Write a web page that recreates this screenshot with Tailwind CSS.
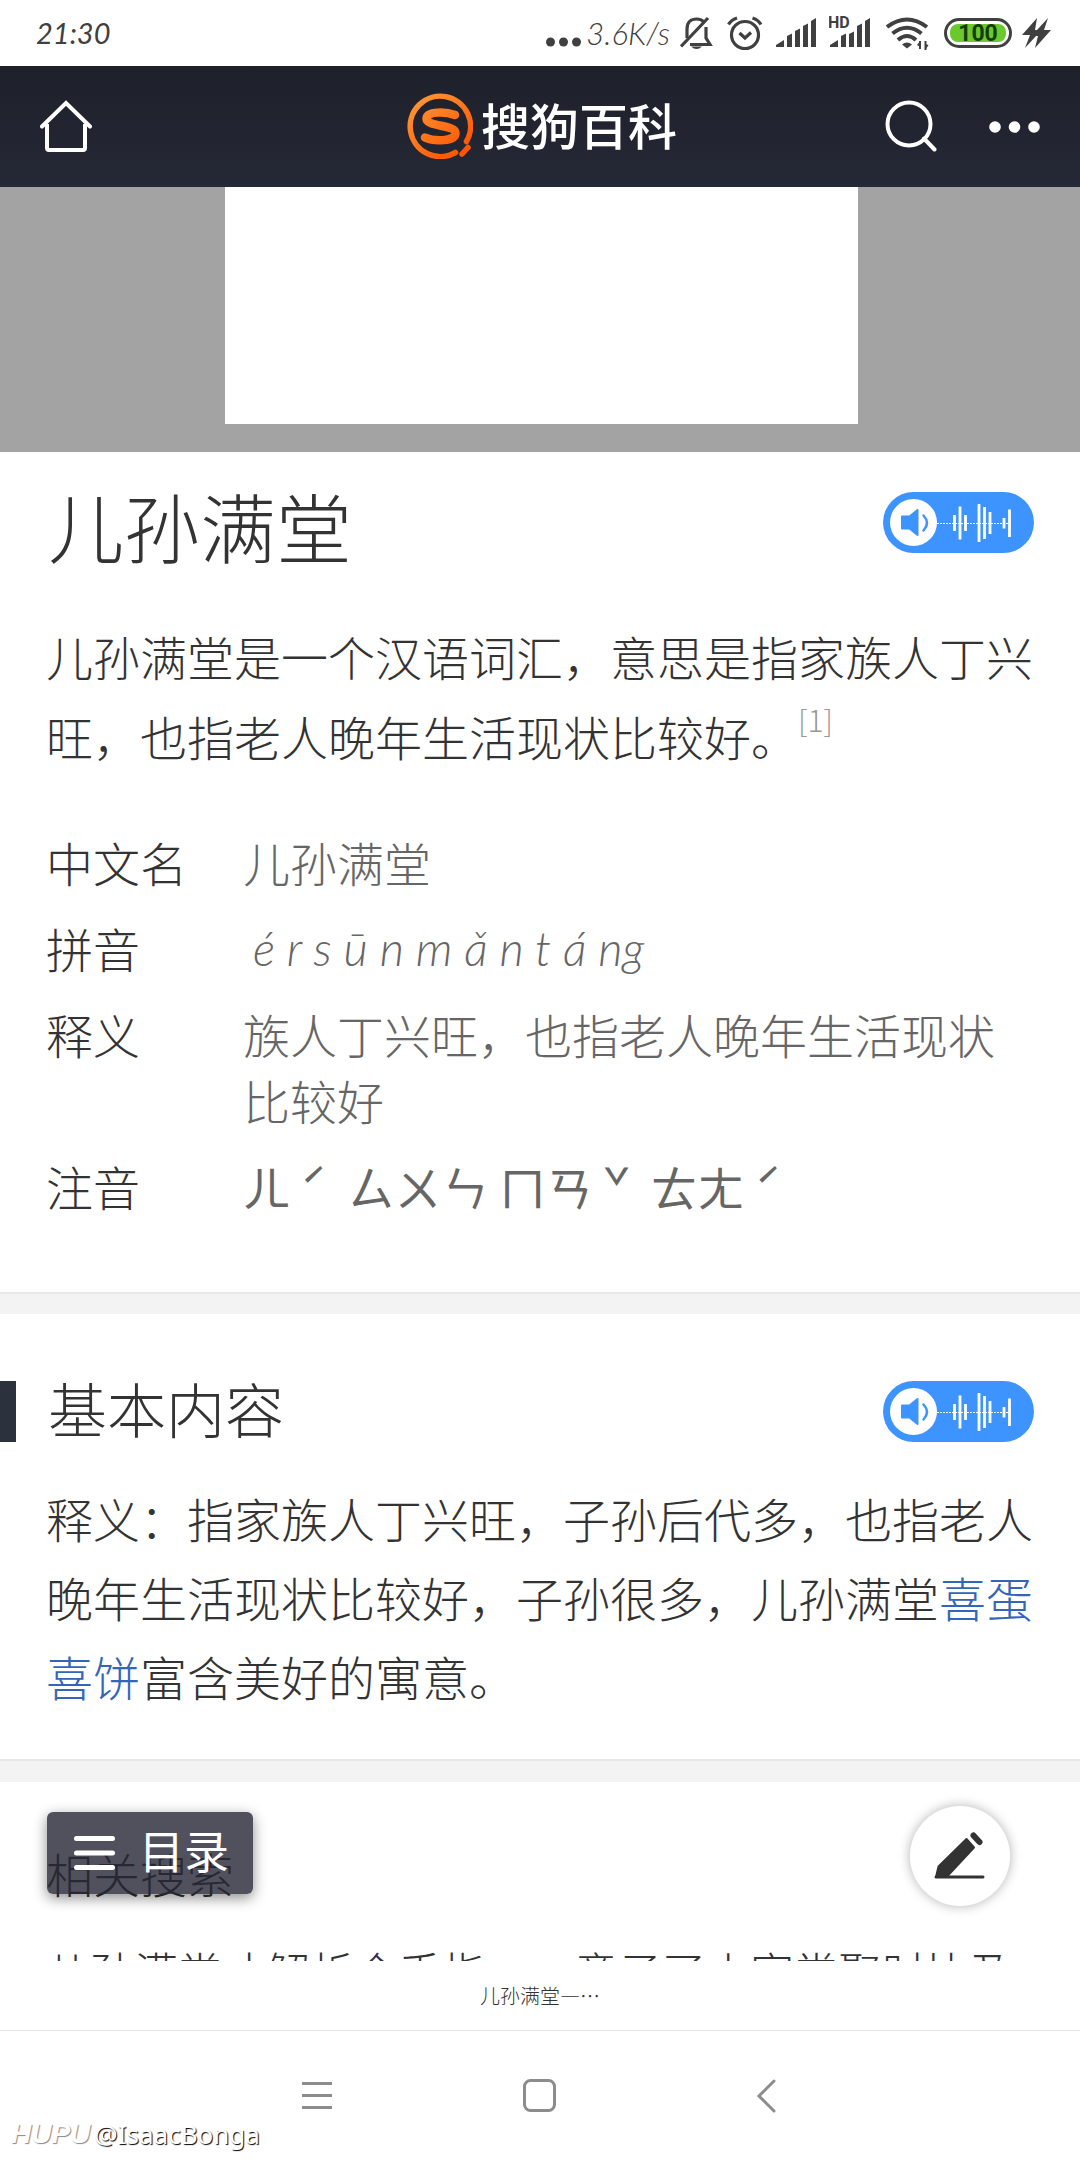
<!DOCTYPE html>
<html lang="zh-CN">
<head>
    <meta charset="UTF-8">
    <meta name="viewport" content="width=device-width, initial-scale=1.0">
    <title>儿孙满堂 - 搜狗百科</title>
    <script src="https://cdn.jsdelivr.net/npm/@tailwindcss/browser@4"></script>
</head>
<body class="h-screen flex flex-col overflow-hidden bg-white text-[#333] font-light font-['Noto_Sans_CJK_SC',sans-serif]">
    <!-- Shared icon -->
    <svg class="hidden">
        <symbol id="audio" viewBox="0 0 151 61">
            <rect width="151" height="61" rx="30.5" fill="#3e94ff"/>
            <circle cx="30.500" cy="30.500" r="23.500" fill="#fff"/>
            <path d="M19 24.500h7.500l8-6.500v25l-8-6.500H19z" fill="#3e94ff" stroke="#3e94ff" stroke-width="2" stroke-linejoin="round"/>
            <path d="M40.500 23.500q7 7.500 0 15" fill="none" stroke="#3e94ff" stroke-width="2.500" stroke-linecap="round"/>
            <path d="M54 31.500h74" stroke="#fff" stroke-dasharray="2 1"/>
            <path d="M71.500 23v16M77 14.500v33M82.500 23v16M96 12v38M101.500 15v32M107 20v22M121 26v10.500M126.500 17.500V45" stroke="#fff" stroke-width="2.800"/>
        </symbol>
    </svg>

    <!-- Status bar -->
    <div class="h-[66px] shrink-0 flex items-center justify-between pl-9 pr-[29px] text-[#404040]">
        <span class="text-[29px] leading-9 italic font-normal font-['Lato',sans-serif]">21:30</span>
        <div class="flex items-center gap-2.5">
            <div class="flex items-center gap-1">
                <svg width="36" height="36" fill="currentColor"><circle cx="4.500" cy="27" r="4.500"/><circle cx="17.500" cy="27" r="4.500"/><circle cx="30.500" cy="27" r="4.500"/></svg>
                <span class="text-[31px] leading-9 italic font-light font-['Lato',sans-serif]">3.6K/s</span>
            </div>
            <svg width="37" height="36" fill="none" stroke="currentColor" stroke-width="3.200">
                <path d="M7 23V14C7 7 11 4 16.500 4c3 0 5.500 1 7 2.500M26 12v11l4 6.500H10"/>
                <path d="M1 31.500L28 3"/>
                <path d="M11 31.500h11q-5.500 5-11 0z" fill="currentColor" stroke="none"/>
            </svg>
            <svg width="39" height="36" fill="none" stroke="currentColor" stroke-width="3.200">
                <circle cx="18" cy="20" r="13.500"/>
                <path d="M12.500 18l5.500 5 6-5.500M1.500 9.500Q4 5 10 3M34 9.500Q31.500 5 25.500 3"/>
            </svg>
            <svg width="43" height="36" fill="currentColor"><path d="M0 32v-2l8-5v7zM11 32V21l5-2.500V32zM19 32V16l5-2.500V32zM27 32V11l5-2.500V32zM35 32V6l5-3v29z"/></svg>
            <svg width="47" height="36" fill="currentColor">
                <path d="M1 32v-2l8-5v7zM12 32V21l5-2.500V32zM20 32V19l5-2.500V32zM28 32V11l5-2.500V32zM36 32V6l5-3v29z"/>
                <text x="-1" y="12.500" font-size="16" font-weight="700" font-family="Roboto, sans-serif">HD</text>
            </svg>
            <svg width="48" height="36" fill="none" stroke="currentColor" stroke-width="4">
                <path d="M1 12Q21-3 41 12M6.500 18.500Q21 7 35.500 18.500M12 25Q21 17 30 25"/>
                <path d="M16 29.500q5-4 10 0L21 33.500z" fill="currentColor" stroke="none"/>
                <path d="M34 26v8M39.500 26v9" stroke-width="2"/>
                <path d="M31 30l3-4v6zM42.500 30l-3 5v-6z" fill="currentColor" stroke="none"/>
            </svg>
            <svg width="68" height="36">
                <rect x="1.500" y="4.500" width="65" height="27" rx="13.500" fill="none" stroke="currentColor" stroke-width="3"/>
                <rect x="6" y="9" width="56" height="18" rx="8" fill="#69c92d"/>
                <text x="34" y="26" text-anchor="middle" font-size="23" font-weight="700" font-family="Roboto, sans-serif" fill="#173c00">100</text>
            </svg>
            <svg width="29" height="36" fill="currentColor"><path d="M15 3L0 20h8L3 33l11-12h2l-3 12 16-18h-7l4-12-11 12h-2z"/></svg>
        </div>
    </div>

    <!-- Site header -->
    <header class="h-[121px] shrink-0 grid grid-cols-3 items-center px-10 pb-0.5 bg-linear-to-b from-[#1e202a] to-[#252936] text-white">
        <a href="#" aria-label="首页" class="justify-self-start">
            <svg width="52" height="52" fill="none" stroke="currentColor" stroke-width="4">
                <path d="M2 26.500L26 3l24 23.500" stroke-linecap="round"/>
                <path d="M7 24v24q0 2 2 2h34q2 0 2-2V24"/>
            </svg>
        </a>
        <a href="#" class="justify-self-center flex items-center gap-2 pl-1">
            <svg width="66" height="66" fill="none" stroke="url(#flame)" stroke-linecap="round">
                <defs>
                    <linearGradient id="flame" gradientUnits="userSpaceOnUse" x1="10" y1="5" x2="52" y2="62">
                        <stop offset="0" stop-color="#ff9536"/><stop offset="1" stop-color="#ff5500"/>
                    </linearGradient>
                </defs>
                <path d="M48.500 59.500A30.200 30.200 0 1 1 59.500 48.500" stroke-width="5.500"/>
                <path d="M55 61l6-6.500" stroke-width="5.500"/>
                <path d="M48 22C40 19 20 17.500 19.500 25.500c-.5 8.500 29 6 29 14.500 0 9-22 8.500-30.500 4.500" stroke-width="8.500"/>
            </svg>
            <span class="text-[49px] leading-[66px] pb-1 font-medium whitespace-nowrap">搜狗百科</span>
        </a>
        <div class="justify-self-end flex items-center gap-[52px]">
            <button type="button" aria-label="搜索">
                <svg width="52" height="52" fill="none" stroke="currentColor" stroke-width="4" stroke-linecap="round">
                    <circle cx="24" cy="24" r="21.500"/><path d="M39 38.500L49.500 49.500"/>
                </svg>
            </button>
            <button type="button" aria-label="更多">
                <svg width="51" height="52" fill="currentColor"><circle cx="6" cy="27" r="5.800"/><circle cx="25.500" cy="27" r="5.800"/><circle cx="45" cy="27" r="5.800"/></svg>
            </button>
        </div>
    </header>

    <div class="relative flex-1 min-h-0">
        <main class="h-full overflow-hidden">
            <div class="bg-[#a3a3a3] pb-7 pl-0.5">
                <div class="mx-auto w-[633px] max-w-full h-[237px] bg-white"></div>
            </div>

            <section class="px-[46px] pt-[18px] pb-[73px]">
                <div class="flex items-start justify-between">
                    <h1 class="pl-0.5 text-[76px] leading-[110px] font-light">儿孙满堂</h1>
                    <button type="button" aria-label="朗读词条" class="mt-[22px]"><svg width="151" height="61"><use href="#audio"/></svg></button>
                </div>
                <p class="mt-9 text-[47px] leading-[80px]">儿孙满堂是一个汉语词汇，意思是指家族人丁兴旺，也指老人晚年生活现状比较好。<sup class="-top-[0.8em] text-[30px] text-[#999]"><a href="#">[1]</a></sup></p>
                <dl class="mt-[53px] grid grid-cols-[197px_1fr] gap-y-5 text-[47px] leading-[66px]">
                    <dt>中文名</dt>
                    <dd class="text-[#666]">儿孙满堂</dd>
                    <dt>拼音</dt>
                    <dd class="pl-2.5 text-[47px] text-[#666] italic font-light font-['Lato','Noto_Sans',sans-serif]">é r s ū n m ǎ n t á ng</dd>
                    <dt>释义</dt>
                    <dd class="text-[#666]">族人丁兴旺，也指老人晚年生活现状比较好</dd>
                    <dt>注音</dt>
                    <dd class="text-[#666] font-normal">ㄦ<span class="inline-block w-[47px] text-center">ˊ</span> ㄙㄨㄣ ㄇㄢ<span class="inline-block w-[47px] text-center">ˇ</span> ㄊㄤ<span class="inline-block w-[47px] text-center">ˊ</span></dd>
                </dl>
            </section>

            <div class="h-[22px] bg-[#f3f3f3] border-t-2 border-[#e8e8e8]"></div>
            <section class="pt-[67px] pb-11">
                <div class="flex items-center justify-between pr-[46px]">
                    <h2 class="flex items-center gap-8 text-[59px] leading-[61px] font-light"><span class="w-4 h-[61px] bg-[#2b323d]"></span><span class="pb-2 leading-[53px]">基本内容</span></h2>
                    <button type="button" aria-label="朗读段落"><svg width="151" height="61"><use href="#audio"/></svg></button>
                </div>
                <p class="mt-9 px-[46px] text-[47px] leading-[79px]">释义：指家族人丁兴旺，子孙后代多，也指老人晚年生活现状比较好，子孙很多，儿孙满堂<a href="#" class="text-[#3366bb]">喜蛋</a><a href="#" class="text-[#3366bb]">喜饼</a>富含美好的寓意。</p>
            </section>

            <div class="h-[23px] bg-[#f3f3f3] border-t-2 border-[#e8e8e8]"></div>
            <section class="px-[46px] pt-[58px]">
                <h2 class="text-[47px] leading-[66px] font-light">相关搜索</h2>
                <p class="mt-8 text-[44px] leading-[66px] whitespace-nowrap">儿孙满堂才解析合手指一，意子了小家常聚时比及</p>
            </section>
        </main>

        <!-- Floating actions -->
        <button type="button" class="absolute left-[47px] bottom-[67px] h-[82px] w-[206px] flex items-center gap-6 pl-[27px] rounded-md bg-[#242634]/80 text-white text-[45px] leading-[60px] font-normal shadow-[0_4px_14px_rgba(0,0,0,0.45)]">
            <svg width="41" height="36" stroke="currentColor" stroke-width="5" stroke-linecap="round"><path d="M2.500 3.500h36M2.500 18h36M2.500 32.500h36"/></svg>
            <span class="pb-1.5">目录</span>
        </button>
        <button type="button" aria-label="编辑" class="absolute right-[70px] bottom-[55px] size-[100px] rounded-full bg-white shadow-[0_0_12px_rgba(0,0,0,0.3)]">
            <svg viewBox="0 0 100 100" fill="#333" stroke="#333" stroke-linejoin="round">
                <path d="M26 71l2.500-10.500L56.500 33l7.500 8.500L37 70.500z" stroke-width="2"/>
                <path d="M26 71h47" stroke-width="3" stroke-linecap="round"/>
                <path d="M63.500 29.500l6 6.500" stroke-width="6" stroke-linecap="round"/>
            </svg>
        </button>
    </div>

    <!-- Browser title strip and system navigation -->
    <footer class="relative shrink-0 bg-white">
        <div class="h-[70px] flex items-center justify-center border-b border-[#e2e2e2] text-[20px]">儿孙满堂—…</div>
        <nav class="h-[129px] flex justify-center gap-[190px] text-[#8c8c8c]">
            <button type="button" aria-label="菜单"><svg width="32" height="34" stroke="currentColor" stroke-width="3"><path d="M1 4.500h30M1 16.500h30M1 28.500h30"/></svg></button>
            <button type="button" aria-label="主页"><svg width="34" height="34" fill="none" stroke="currentColor" stroke-width="3"><rect x="1.500" y="1.500" width="30" height="30" rx="6"/></svg></button>
            <button type="button" aria-label="返回"><svg width="32" height="34" fill="none" stroke="currentColor" stroke-width="3" stroke-linecap="round"><path d="M27 2L12 17l15 15"/></svg></button>
        </nav>
        <div class="absolute left-[11px] bottom-1.5 flex items-center gap-1 text-white">
            <span class="text-[28px] leading-10 italic font-bold font-['Liberation_Sans',sans-serif] text-shadow-[1px_1px_1px_#888]">HUPU</span>
            <span class="text-[26px] leading-10 font-normal font-['Noto_Sans',sans-serif] text-shadow-[1px_1px_1px_#000]">@IsaacBonga</span>
        </div>
    </footer>
</body>
</html>
